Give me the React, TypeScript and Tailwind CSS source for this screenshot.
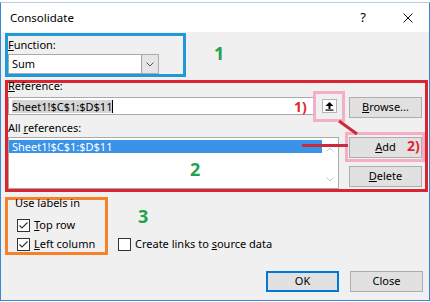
import React from "react";

/* ------------------------------------------------------------------ */
/*  Small pieces                                                       */
/* ------------------------------------------------------------------ */

function Btn({ children, primary }: { children: React.ReactNode; primary?: boolean }) {
  return (
    <div
      className={
        primary
          ? "w-[73px] h-[21px] flex items-center justify-center bg-[#e1e1e1] border-2 border-[#0078d7]"
          : "w-[73px] h-[21px] flex items-center justify-center bg-[#e1e1e1] border border-[#adadad]"
      }
    >
      {children}
    </div>
  );
}

function CheckBox({ checked }: { checked?: boolean }) {
  return (
    <div className="w-[13px] h-[13px] shrink-0 border border-[#333333] bg-white flex items-center justify-center">
      {checked && (
        <svg width="11" height="11" viewBox="0 0 11 11">
          <path d="M1.5 5.5 L4 8 L9.5 2.5" fill="none" stroke="#333333" strokeWidth="1.1" />
        </svg>
      )}
    </div>
  );
}

/* ------------------------------------------------------------------ */
/*  Dialog                                                             */
/* ------------------------------------------------------------------ */

export default function App() {
  return (
    <div className="relative w-[430px] h-[302px] bg-white overflow-hidden text-black font-[family-name:'Noto_Sans',sans-serif]">
      <div className="mt-[2px] w-[430px] h-[299px] border border-[#3d86d6] border-t-[#b8cce2] bg-[#f0f0f0] flex flex-col">
        {/* Title bar */}
        <div className="h-[29px] shrink-0 bg-white flex items-center pl-[9px] pr-[16px]">
          <span className="text-[11.5px]">Consolidate</span>
          <span className="ml-auto mr-[37px] text-[13px]">?</span>
          <svg width="10" height="10" viewBox="0 0 10 10">
            <path d="M0.5 0.5 L9.5 9.5 M9.5 0.5 L0.5 9.5" stroke="#111111" strokeWidth="1" />
          </svg>
        </div>

        <div className="flex-1 flex flex-col pl-[4px] text-[11px]">
          {/* Function */}
          <div className="mt-[1px] w-[181px] h-[44px] border-[3px] border-[#1e9ad9] flex flex-col">
            <div className="h-[18px] leading-[18px]">
              <span className="underline">F</span>unction:
            </div>
            <div className="w-[151px] h-[20px] bg-white border border-[#ababab] flex items-center">
              <span className="pl-[3px]">Sum</span>
              <div className="ml-auto w-[17px] h-full bg-[#e5e5e5] border-l border-[#a0a0a0] flex items-center justify-center">
                <svg width="8" height="5" viewBox="0 0 8 5">
                  <path d="M0.5 0.5 L4 4 L7.5 0.5" fill="none" stroke="#555555" strokeWidth="1" />
                </svg>
              </div>
            </div>
          </div>

          {/* References */}
          <div className="mt-[3px] w-[423px] h-[112px] border-[3px] border-[#d9252f] flex">
            <div className="w-[331px] flex flex-col">
              <div className="-mt-[4px] h-[14px] leading-[14px]">
                <span className="underline">R</span>eference:
              </div>
              <div className="mt-[4px] h-[18px] flex items-center">
                <div className="w-[308px] h-[18px] bg-white border border-[#a9a9a9] flex items-center pl-[3px]">
                  <span className="bg-[#d5d5d5] leading-[13px]">Sheet1!$C$1:$D$11</span>
                  <span className="w-px h-[13px] bg-black" />
                </div>
                <div className="ml-[6px] w-[15px] h-[14px] border border-[#b4b4b4] bg-white flex items-center justify-center">
                  <svg width="9" height="9" viewBox="0 0 9 9">
                    <path d="M4.5 0 L8.5 4 L0.5 4 Z" fill="#000000" />
                    <rect x="3.5" y="4" width="2" height="3" fill="#000000" />
                    <rect x="0.5" y="7.5" width="8" height="1.2" fill="#000000" />
                  </svg>
                </div>
              </div>
              <div className="mt-[6px] h-[14px] leading-[14px]">
                All <span className="underline">r</span>eferences:
              </div>
              <div className="mt-[2px] h-[52px] bg-white border border-[#a9a9a9] flex">
                <div className="flex-1 pt-[2px]">
                  <div className="h-[13px] leading-[13px] pl-[3px] bg-[#3b93e8] text-white">Sheet1!$C$1:$D$11</div>
                </div>
                <div className="w-[16px] flex flex-col items-center justify-between pt-[9px] pb-[6px]">
                  <svg width="8" height="5" viewBox="0 0 8 5">
                    <path d="M0.5 4.5 L4 1 L7.5 4.5" fill="none" stroke="#c4c4c4" strokeWidth="1" />
                  </svg>
                  <svg width="8" height="5" viewBox="0 0 8 5">
                    <path d="M0.5 0.5 L4 4 L7.5 0.5" fill="none" stroke="#c4c4c4" strokeWidth="1" />
                  </svg>
                </div>
              </div>
            </div>
            <div className="ml-[10px] flex flex-col">
              <div className="mt-[14px]">
                <Btn>
                  <span>
                    <span className="underline">B</span>rowse...
                  </span>
                </Btn>
              </div>
              <div className="mt-[19px]">
                <Btn>
                  <span>
                    <span className="underline">A</span>dd
                  </span>
                </Btn>
              </div>
              <div className="mt-[8px]">
                <Btn>
                  <span>
                    <span className="underline">D</span>elete
                  </span>
                </Btn>
              </div>
            </div>
          </div>

          {/* Labels */}
          <div className="mt-[5px] flex">
            <div className="w-[103px] h-[58px] border-[3px] border-[#f5822a] flex flex-col">
              <div className="-mt-[3px] h-[12px] leading-[12px] pl-[7px]">Use labels in</div>
              <div className="mt-[10px] h-[13px] pl-[9px] flex items-center gap-[4px]">
                <CheckBox checked />
                <span>
                  <span className="underline">T</span>op row
                </span>
              </div>
              <div className="mt-[6px] h-[13px] pl-[9px] flex items-center gap-[4px]">
                <CheckBox checked />
                <span>
                  <span className="underline">L</span>eft column
                </span>
              </div>
            </div>
            <div className="ml-[10px] mt-[41px] h-[13px] flex items-center gap-[4px]">
              <CheckBox />
              <span>
                Create links to <span className="underline">s</span>ource data
              </span>
            </div>
          </div>

          {/* Footer buttons */}
          <div className="mt-[16px] flex justify-end gap-[11px] pr-[6px]">
            <Btn primary>OK</Btn>
            <Btn>Close</Btn>
          </div>
        </div>
      </div>

      {/* Annotations */}
      <div className="absolute left-[313px] top-[91px] w-[32px] h-[31px] border-[3px] border-[#f6aec6]" />
      <div className="absolute left-[345px] top-[132px] w-[80px] h-[30px] border-[3px] border-[#f6aec6]" />
      <div className="absolute left-[302px] top-[144px] w-[46px] h-[3px] bg-[#c92a3e]" />
      <svg className="absolute left-[336px] top-[118px]" width="26" height="20" viewBox="0 0 26 20">
        <path d="M3 3 L21 16" stroke="#c92a3e" strokeWidth="3" />
      </svg>
      <div className="absolute left-[294px] top-[100px] text-[14px] leading-[14px] font-bold text-[#e1252f]">1)</div>
      <div className="absolute left-[407px] top-[139px] text-[14px] leading-[14px] font-bold text-[#e1252f]">2)</div>
      <div className="absolute left-[214px] top-[44px] text-[18px] leading-[18px] font-bold text-[#22a34a]">1</div>
      <div className="absolute left-[190px] top-[160px] text-[18px] leading-[18px] font-bold text-[#22a34a]">2</div>
      <div className="absolute left-[138px] top-[207px] text-[18px] leading-[18px] font-bold text-[#22a34a]">3</div>
    </div>
  );
}
